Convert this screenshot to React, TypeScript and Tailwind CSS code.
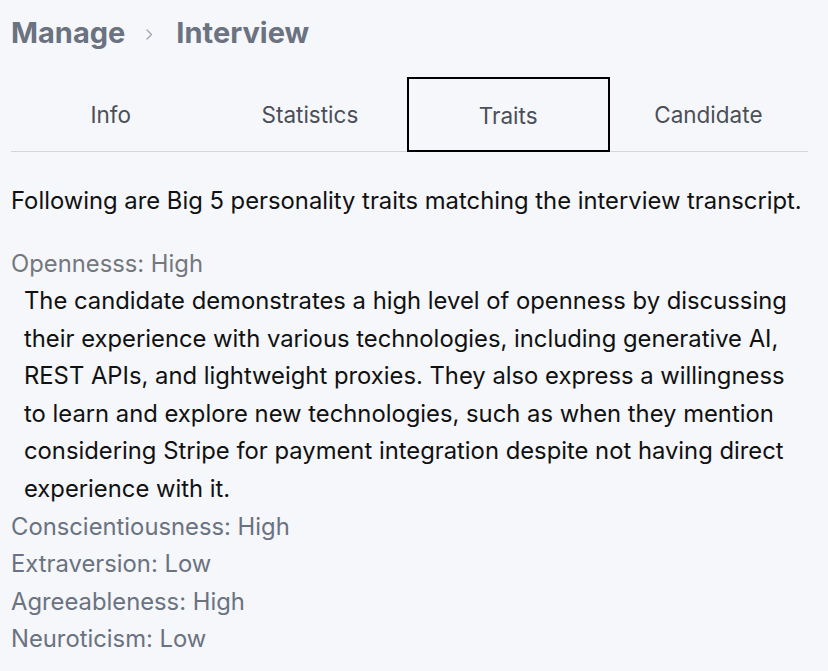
import React from "react";

const tabs = ["Info", "Statistics", "Traits", "Candidate"];

export default function App() {
  return (
    <div
      className="min-h-[671px] w-full bg-[#f5f7fb] pl-[11px] pr-[20px] text-[23.8px]"
      style={{ fontFamily: "Inter, 'Noto Sans', sans-serif" }}
    >
      <div className="flex items-center pt-[15px] h-[51px] text-[29px] font-bold text-[#6b7280] leading-[36px]">
        <span>Manage</span>
        <svg
          className="ml-[21px] mr-[23px] mt-[2px]"
          width="7"
          height="11"
          viewBox="0 0 7 11"
          fill="none"
        >
          <path d="M1 1l4.5 4.5L1 10" stroke="#a3a6ad" strokeWidth="1.4" strokeLinecap="round" strokeLinejoin="round" />
        </svg>
        <span>Interview</span>
      </div>
      <div className="mt-[26px] grid grid-cols-4 w-[797px] h-[75px] border-b border-[#d4d6da] text-[22.5px]">
        {tabs.map((t) => (
          <div
            key={t}
            className={
              t === "Traits"
                ? "flex items-center justify-center border-2 border-black text-[#4b4f57] -mb-px -ml-[3px] -mr-px pt-[2px]"
                : "flex items-center justify-center text-[#4b4f57] pt-[2px]"
            }
          >
            {t}
          </div>
        ))}
      </div>
      <div className="mt-[30px] leading-[37.5px] text-[#111111]">
        Following are Big 5 personality traits matching the interview transcript.
      </div>
      <div className="mt-[25px] leading-[37.6px]">
        <div className="text-[#74777e]">Opennesss: High</div>
        <p className="pl-[13px] pr-[8px] text-[#111111]">
          The candidate demonstrates a high level of openness by discussing their experience with various technologies, including generative AI, REST APIs, and lightweight proxies. They also express a willingness to learn and explore new technologies, such as when they mention considering Stripe for payment integration despite not having direct experience with it.
        </p>
        <div className="text-[#6b7280]">Conscientiousness: High</div>
        <div className="text-[#6b7280]">Extraversion: Low</div>
        <div className="text-[#6b7280]">Agreeableness: High</div>
        <div className="text-[#6b7280]">Neuroticism: Low</div>
      </div>
    </div>
  );
}
